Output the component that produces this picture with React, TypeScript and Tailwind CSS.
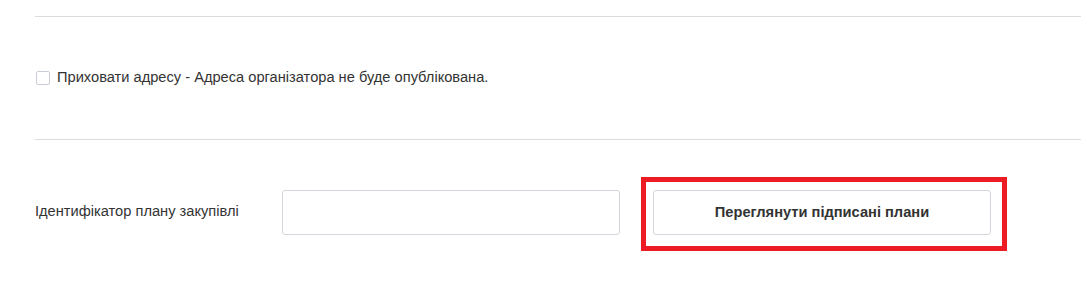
export default function App() {
  return (
    <div
      className="w-[1081px] h-[304px] bg-white pl-[35px] pt-4 text-[14.65px] text-[#333]"
      style={{ fontFamily: '"Liberation Sans", Arial, sans-serif' }}
    >
      <div className="border-t border-[#dcdcdc]" />
      <label className="mt-[51px] flex h-[20px] items-center">
        <span className="ml-[1px] h-[14px] w-[14px] rounded-[2px] border border-[#c9cdd6] bg-white" />
        <span className="ml-[7px]">Приховати адресу - Адреса організатора не буде опублікована.</span>
      </label>
      <div className="mt-[51px] border-t border-[#dcdcdc]" />
      <div className="mt-[50px] flex h-[45px] items-center">
        <div className="w-[247px] pb-[2px]">Ідентифікатор плану закупівлі</div>
        <div className="h-[45px] w-[338px] rounded-[3px] border border-[#d3d6dd] bg-white" />
        <div className="relative ml-[33px] h-[45px] w-[338px]">
          <div className="absolute left-[-12px] top-[-13px] right-[-16px] bottom-[-16px] border-[5px] border-[#ed1c24]" />
          <button className="relative flex h-[45px] w-full items-center justify-center rounded-[3px] border border-[#d3d6dd] bg-white font-bold text-[#333]">
            Переглянути підписані плани
          </button>
        </div>
      </div>
    </div>
  );
}
